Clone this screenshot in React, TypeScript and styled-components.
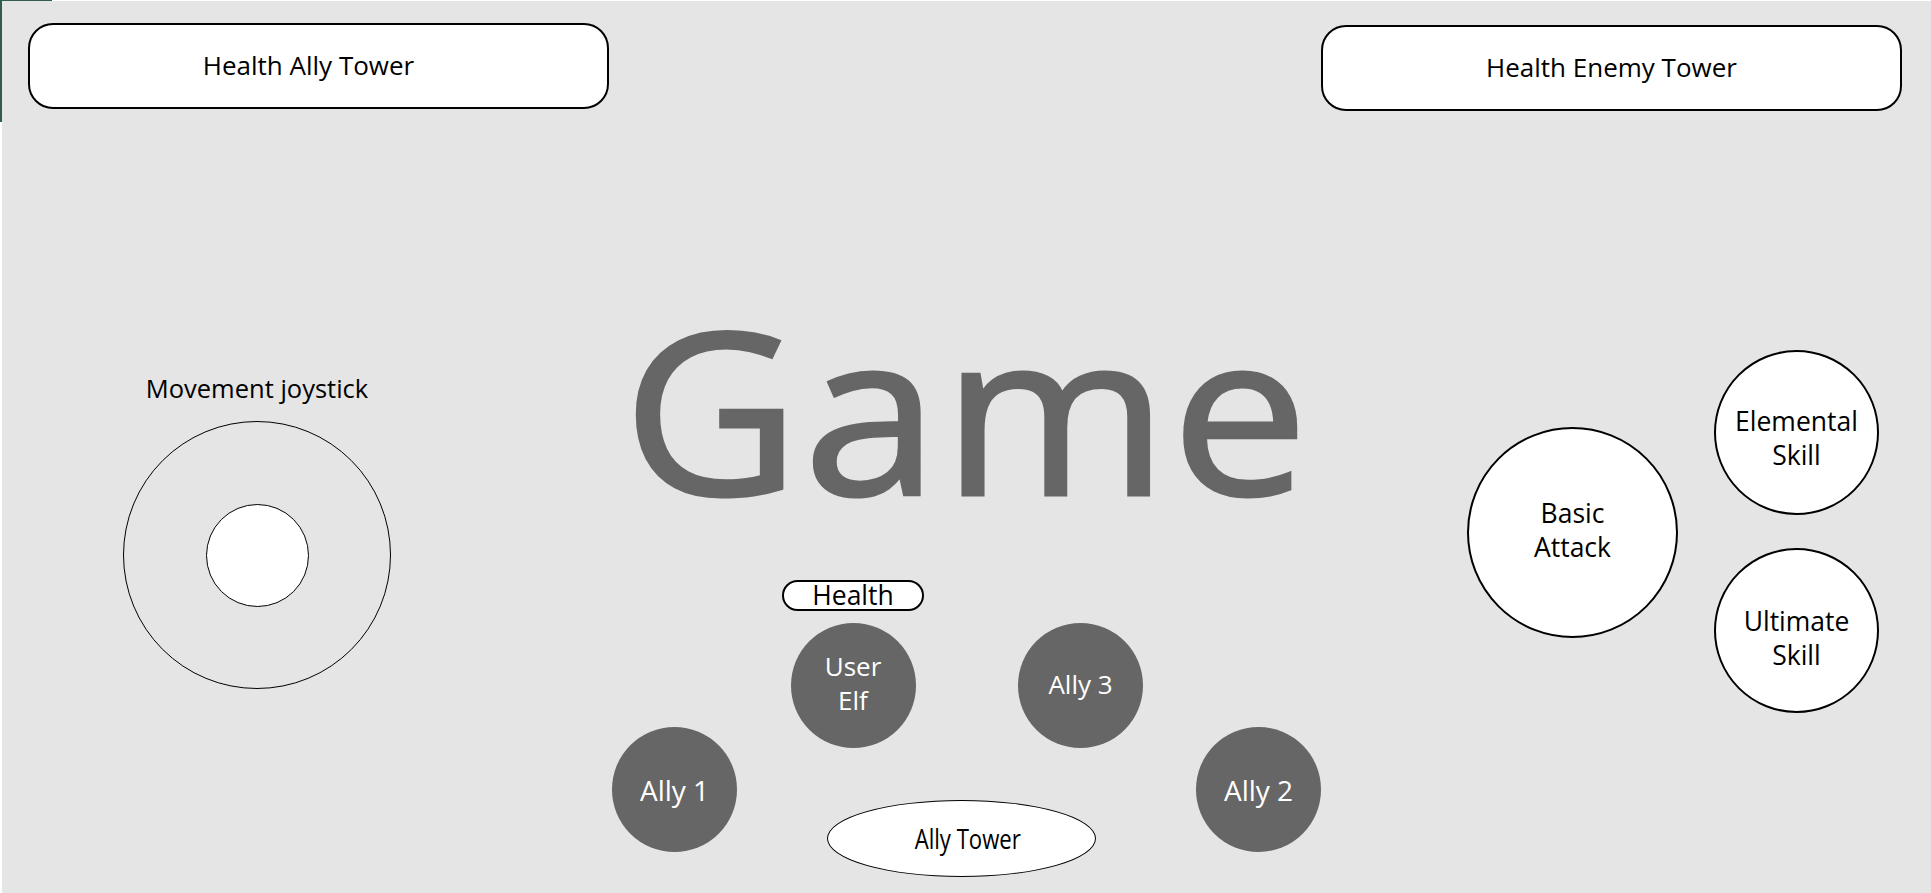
import React from "react";
import styled, { createGlobalStyle } from "styled-components";

const GlobalStyle = createGlobalStyle`
  html, body {
    margin: 0;
    padding: 0;
    background: #ffffff;
  }
  body {
    font-family: "Open Sans", "Noto Sans", sans-serif;
    color: #000000;
  }
  * {
    box-sizing: border-box;
  }
`;

const Screen = styled.div`
  position: relative;
  width: 1931px;
  height: 893px;
  background: #e5e5e5;
  box-shadow: inset 2px 1px 0 #ffffff;
  display: flex;
  flex-direction: column;
  overflow: hidden;
  /* slide edge left over from the mockup export */
  &::before {
    content: "";
    position: absolute;
    left: 0;
    top: 0;
    width: 2px;
    height: 122px;
    background: #2f5e4d;
  }
  &::after {
    content: "";
    position: absolute;
    left: 0;
    top: 0;
    width: 52px;
    height: 1px;
    background: #2f5e4d;
  }
`;

const TopBar = styled.div`
  display: flex;
  justify-content: space-between;
  align-items: flex-start;
  padding: 23px 29px 0 28px;
`;

const HealthBar = styled.div<{ $drop?: number; $shift?: number }>`
  width: 581px;
  height: 86px;
  margin-top: ${(p) => p.$drop || 0}px;
  padding-right: ${(p) => p.$shift || 0}px;
  padding-bottom: 2px;
  border: 2px solid #000;
  border-radius: 25px;
  background: #fff;
  display: flex;
  align-items: center;
  justify-content: center;
  font-size: 26px;
`;

const Main = styled.div`
  flex: 1;
  display: grid;
  grid-template-columns: 1fr 711px 1fr;
`;

const LeftColumn = styled.div`
  padding: 262px 0 0 123px;
  display: flex;
  flex-direction: column;
  align-items: center;
  width: 391px;
`;

const JoystickLabel = styled.div`
  font-size: 25.5px;
  line-height: 30px;
  margin-bottom: 18px;
  white-space: nowrap;
`;

const JoystickBase = styled.div`
  width: 268px;
  height: 268px;
  border: 1.6px solid #000;
  border-radius: 50%;
  display: flex;
  align-items: center;
  justify-content: center;
`;

const JoystickKnob = styled.div`
  width: 103px;
  height: 103px;
  border: 1.6px solid #000;
  border-radius: 50%;
  background: #fff;
`;

const CenterColumn = styled.div`
  padding-top: 183px;
  display: flex;
  flex-direction: column;
  align-items: center;
`;

const Title = styled.h1`
  margin: 0;
  padding-left: 3px;
  font-size: 226px;
  line-height: 226px;
  font-weight: 400;
  letter-spacing: 3px;
  -webkit-text-stroke: 3px #666666;
  transform: scaleX(1.08);
  color: #666666;
`;

const Party = styled.div`
  margin-top: 60px;
  width: 711px;
  display: flex;
  flex-direction: column;
`;

const FrontRow = styled.div`
  display: flex;
  align-items: flex-end;
  gap: 94px;
  padding-left: 172px;
`;

const BackRow = styled.div`
  display: flex;
  align-items: flex-start;
  gap: 90px;
  padding-left: 2px;
  margin-top: -21px;
`;

const PlayerUnit = styled.div`
  width: 142px;
  display: flex;
  flex-direction: column;
  align-items: center;
  gap: 12px;
`;

const HealthPill = styled.div`
  width: 142px;
  height: 31px;
  border: 2px solid #000;
  border-radius: 16px;
  background: #fff;
  font-size: 26.5px;
  line-height: 27px;
  text-align: center;
`;

const Member = styled.div<{ $big?: boolean; $lift?: number }>`
  width: 125px;
  height: 125px;
  flex-shrink: 0;
  padding-bottom: ${(p) => p.$lift || 0}px;
  border-radius: 50%;
  background: #666666;
  color: #ffffff;
  display: flex;
  align-items: center;
  justify-content: center;
  text-align: center;
  font-size: ${(p) => (p.$big ? 28 : 26)}px;
  line-height: 34px;
`;

const Tower = styled.div`
  width: 270px;
  height: 77px;
  margin: 73px 10px 0 0;
  padding-left: 13px;
  border: 1.6px solid #000;
  border-radius: 50%;
  background: #fff;
  display: flex;
  align-items: center;
  justify-content: center;
`;

const TowerLabel = styled.span`
  display: inline-block;
  font-size: 27px;
  line-height: 34px;
  transform: scaleX(0.82);
  white-space: nowrap;
`;

const RightColumn = styled.div`
  padding: 239px 0 0 146px;
  display: flex;
  align-items: flex-start;
  gap: 36px;
`;

const SkillStack = styled.div`
  display: flex;
  flex-direction: column;
  gap: 33px;
`;

const SkillButton = styled.div<{ $size: number; $drop?: number; $nudge?: number }>`
  width: ${(p) => p.$size}px;
  height: ${(p) => p.$size}px;
  margin-top: ${(p) => p.$drop || 0}px;
  padding-top: ${(p) => Math.max(p.$nudge || 0, 0)}px;
  padding-bottom: ${(p) => Math.max(-(p.$nudge || 0), 0)}px;
  flex-shrink: 0;
  border: 2px solid #000;
  border-radius: 50%;
  background: #fff;
  display: flex;
  align-items: center;
  justify-content: center;
  text-align: center;
  font-size: 26.5px;
  line-height: 34px;
`;

const App = () => {
  return (
    <>
      <GlobalStyle />
      <Screen>
        <TopBar>
          <HealthBar $shift={20}>Health Ally Tower</HealthBar>
          <HealthBar $drop={2}>Health Enemy Tower</HealthBar>
        </TopBar>
        <Main>
          <LeftColumn>
            <JoystickLabel>Movement joystick</JoystickLabel>
            <JoystickBase>
              <JoystickKnob />
            </JoystickBase>
          </LeftColumn>
          <CenterColumn>
            <Title>Game</Title>
            <Party>
              <FrontRow>
                <PlayerUnit>
                  <HealthPill>Health</HealthPill>
                  <Member $lift={5}>
                    User
                    <br />
                    Elf
                  </Member>
                </PlayerUnit>
                <Member $lift={4}>Ally 3</Member>
              </FrontRow>
              <BackRow>
                <Member $big>Ally 1</Member>
                <Tower>
                  <TowerLabel>Ally Tower</TowerLabel>
                </Tower>
                <Member $big>Ally 2</Member>
              </BackRow>
            </Party>
          </CenterColumn>
          <RightColumn>
            <SkillButton $size={211} $drop={77} $nudge={-5}>
              Basic
              <br />
              Attack
            </SkillButton>
            <SkillStack>
              <SkillButton $size={165} $nudge={10}>
                Elemental
                <br />
                Skill
              </SkillButton>
              <SkillButton $size={165} $nudge={14}>
                Ultimate
                <br />
                Skill
              </SkillButton>
            </SkillStack>
          </RightColumn>
        </Main>
      </Screen>
    </>
  );
};

export default App;
